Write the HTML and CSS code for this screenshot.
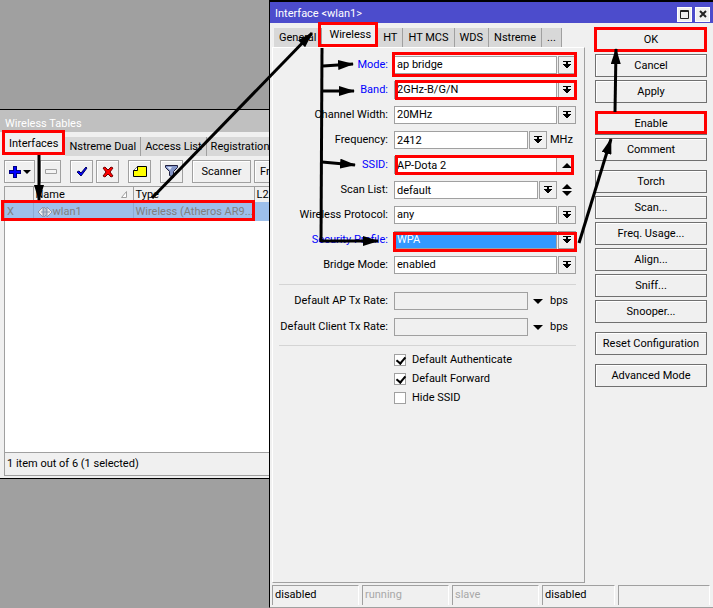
FILE: index.html
```
<!DOCTYPE html>
<html lang="en">
  <head>
    <meta charset="utf-8" />
    <title>Interface wlan1</title>
    <link rel="stylesheet" href="styles.css">
  </head>

  <body>
    <svg class="symbols" aria-hidden="true">
      <symbol id="drop" viewBox="0 0 8 8">
        <path d="M0 0h8v1H0zM3 1h2v2h3v1H7v1H6v1H5v1H3V6H2V5H1V4H0V3h3z" />
      </symbol>
      <symbol id="down" viewBox="0 0 10 5"><path d="M0 0h10L5 5z" /></symbol>
      <symbol id="up" viewBox="0 0 10 5"><path d="M0 5h10L5 0z" /></symbol>
    </svg>

    <section class="window tables-window">
      <header class="title-bar">Wireless Tables</header>
      <nav class="tabs">
        <button class="tab active">Interfaces</button>
        <button class="tab">Nstreme Dual</button>
        <button class="tab">Access List</button>
        <button class="tab">Registration</button>
      </nav>
      <div class="toolbar">
        <button class="tool tool-add" aria-label="Add">
          <svg width="22" height="12" viewBox="0 0 22 12"><path d="M4 0h4v4h4v4H8v4H4V8H0V4h4z" fill="#000080" /><path d="M5 1h2v4h4v2H7v4H5V7H1V5h4z" fill="#0000ff" /><path d="M14 4h8l-4 4z" /></svg>
        </button>
        <button class="tool tool-remove" aria-label="Remove">
          <svg width="12" height="5" viewBox="0 0 12 5"><path d="M.5.5h11v4H.5z" fill="#f4f4f4" stroke="#a0a0a0" /></svg>
        </button>
        <button class="tool tool-enable" aria-label="Enable">
          <svg width="12" height="11" viewBox="0 0 12 11"><path d="M1 6l2-1 2 2 5-6 1 1-6 8z" fill="#0000ff" stroke="#000060" /></svg>
        </button>
        <button class="tool tool-disable" aria-label="Disable">
          <svg width="12" height="12" viewBox="0 0 12 12"><path d="M1 2l2-1 3 3 3-3 2 1-3 4 3 4-2 1-3-3-3 3-2-1 3-4z" fill="#ff0000" stroke="#700000" /></svg>
        </button>
        <button class="tool tool-comment" aria-label="Comment">
          <svg width="14" height="11" viewBox="0 0 14 11"><path d="M4.500.5h9v10H.5v-6z" fill="#ffff00" stroke="#000" /><path d="M.5 4.500h4v-4" fill="#fff" stroke="#000" /></svg>
        </button>
        <button class="tool tool-filter" aria-label="Filter">
          <svg width="13" height="13" viewBox="0 0 13 13"><path d="M.5.5h12v2l-4 4v6l-4-2v-4l-4-4z" fill="#8496c8" stroke="#202040" /><path d="M2 2h5L5 5z" fill="#dce4f8" /></svg>
        </button>
        <button class="tool tool-scanner">Scanner</button>
        <button class="tool tool-freq">Freq. Usage</button>
      </div>
      <div class="list">
        <table>
          <thead>
            <tr>
              <th class="col-flag"></th>
              <th class="col-name">
                <div class="sort">Name
                  <svg width="6" height="7" viewBox="0 0 6 7"><path d="M.5 6.500L5.500.5v6z" fill="#fff" stroke="#a0a0a0" /></svg>
                </div>
              </th>
              <th class="col-type">Type</th>
              <th>L2 MTU</th>
            </tr>
          </thead>
          <tbody>
            <tr>
              <td>X</td>
              <td>
                <div class="iface">
                  <svg width="15" height="12" viewBox="0 0 15 12"><path d="M5 1L0 6l5 5zM6 1v10l2-2V3zM9 1v10l5-5z" fill="#eee" stroke="#8c98ac" /><path d="M3 6h9" stroke="#8c98ac" /></svg>
                  wlan1
                </div>
              </td>
              <td>Wireless (Atheros AR9...</td>
              <td></td>
            </tr>
          </tbody>
        </table>
      </div>
      <footer class="count">1 item out of 6 (1 selected)</footer>
    </section>

    <section class="window interface-window">
      <header class="title-bar">
        <span class="title">Interface &lt;wlan1&gt;</span>
        <button class="win-button" aria-label="Maximize">
          <svg width="9" height="9" viewBox="0 0 9 9"><path d="M.5.5h8v8h-8zM0 1.500h9" fill="none" stroke="#222" /></svg>
        </button>
        <button class="win-button" aria-label="Close">
          <svg width="8" height="8" viewBox="0 0 8 8"><path d="M1 1l6 6M7 1L1 7" stroke="#222" stroke-width="2" /></svg>
        </button>
      </header>

      <div class="main">
        <div class="left">
          <nav class="tabs">
            <button class="tab">General</button>
            <button class="tab active">Wireless</button>
            <button class="tab">HT</button>
            <button class="tab">HT MCS</button>
            <button class="tab">WDS</button>
            <button class="tab">Nstreme</button>
            <button class="tab">...</button>
          </nav>
          <form class="panel">
            <div class="fields">
              <div class="row">
                <label class="changed" for="mode">Mode:</label>
                <select id="mode"><option>ap bridge</option></select>
                <button type="button" class="drop" aria-label="Choose mode"><svg><use href="#drop" /></svg></button>
              </div>
              <div class="row">
                <label class="changed" for="band">Band:</label>
                <select id="band"><option>2GHz-B/G/N</option></select>
                <button type="button" class="drop" aria-label="Choose band"><svg><use href="#drop" /></svg></button>
              </div>
              <div class="row">
                <label for="width">Channel Width:</label>
                <select id="width"><option>20MHz</option></select>
                <button type="button" class="drop" aria-label="Choose width"><svg><use href="#drop" /></svg></button>
              </div>
              <div class="row">
                <label for="frequency">Frequency:</label>
                <input type="text" id="frequency" value="2412">
                <button type="button" class="drop" aria-label="Choose frequency"><svg><use href="#drop" /></svg></button>
                <span class="unit">MHz</span>
              </div>
              <div class="row">
                <label class="changed" for="ssid">SSID:</label>
                <input type="text" id="ssid" value="AP-Dota 2">
                <button type="button" class="plain" aria-label="Clear SSID"><svg><use href="#up" /></svg></button>
              </div>
              <div class="row">
                <label for="scan-list">Scan List:</label>
                <input type="text" id="scan-list" value="default">
                <button type="button" class="drop" aria-label="Choose scan list"><svg><use href="#drop" /></svg></button>
                <button type="button" class="plain spin" aria-label="Add or remove"><svg><use href="#up" /></svg><svg><use href="#down" /></svg></button>
              </div>
              <div class="row">
                <label for="protocol">Wireless Protocol:</label>
                <select id="protocol"><option>any</option></select>
                <button type="button" class="drop" aria-label="Choose protocol"><svg><use href="#drop" /></svg></button>
              </div>
              <div class="row">
                <label class="changed" for="security">Security Profile:</label>
                <select id="security" class="selected"><option>WPA</option></select>
                <button type="button" class="drop" aria-label="Choose profile"><svg><use href="#drop" /></svg></button>
              </div>
              <div class="row">
                <label for="bridge">Bridge Mode:</label>
                <select id="bridge"><option>enabled</option></select>
                <button type="button" class="drop" aria-label="Choose bridge mode"><svg><use href="#drop" /></svg></button>
              </div>
            </div>

            <div class="fields rates">
              <div class="row">
                <label for="ap-rate">Default AP Tx Rate:</label>
                <input type="text" id="ap-rate" class="empty">
                <button type="button" class="plain" aria-label="Set AP rate"><svg><use href="#down" /></svg></button>
                <span class="unit">bps</span>
              </div>
              <div class="row">
                <label for="client-rate">Default Client Tx Rate:</label>
                <input type="text" id="client-rate" class="empty">
                <button type="button" class="plain" aria-label="Set client rate"><svg><use href="#down" /></svg></button>
                <span class="unit">bps</span>
              </div>
            </div>

            <div class="checks">
              <label><input type="checkbox" checked> Default Authenticate</label>
              <label><input type="checkbox" checked> Default Forward</label>
              <label><input type="checkbox"> Hide SSID</label>
            </div>
          </form>
        </div>

        <aside class="actions">
          <div class="group">
            <button>OK</button>
            <button>Cancel</button>
            <button>Apply</button>
          </div>
          <div class="group">
            <button>Enable</button>
            <button>Comment</button>
          </div>
          <div class="group">
            <button>Torch</button>
            <button>Scan...</button>
            <button>Freq. Usage...</button>
            <button>Align...</button>
            <button>Sniff...</button>
            <button>Snooper...</button>
          </div>
          <div class="group">
            <button>Reset Configuration</button>
          </div>
          <div class="group">
            <button>Advanced Mode</button>
          </div>
        </aside>
      </div>

      <footer class="status">
        <span>disabled</span>
        <span class="off">running</span>
        <span class="off">slave</span>
        <span>disabled</span>
        <span></span>
      </footer>
    </section>

    <!-- red frames and arrows drawn over both windows -->
    <svg class="marks" width="713" height="608" viewBox="0 0 713 608" aria-hidden="true">
      <defs>
        <marker id="head" markerUnits="userSpaceOnUse" markerWidth="16" markerHeight="10" refX="15" refY="5" orient="auto">
          <path d="M0 0l16 5-16 5z" />
        </marker>
      </defs>
      <g class="frames">
        <rect x="3.500" y="131.500" width="60" height="22" />
        <rect x="2.500" y="201.500" width="251" height="18" />
        <rect x="319.500" y="23.500" width="57" height="22" />
        <rect x="393.500" y="53.500" width="182" height="22" />
        <rect x="396.500" y="81.500" width="179" height="17" />
        <rect x="396.500" y="156.500" width="176" height="17" />
        <rect x="394.500" y="233.500" width="181" height="17" />
        <rect x="595.500" y="28.500" width="110" height="22" />
        <rect x="596.500" y="112.500" width="109" height="20" />
      </g>
      <g class="arrows">
        <path d="M39 155V200" />
        <path d="M152 198L312 33" />
        <path d="M323 66L353 64" />
        <path d="M323 91H354" />
        <path d="M322 162L355 165" />
        <path d="M321 241H378" />
        <path d="M579 243L611 139" />
        <path d="M615 112L616 49" />
      </g>
      <path class="trunk" d="M322 48L321 242" />
    </svg>
  </body>
</html>
```
FILE: styles.css
```
* {
  box-sizing: border-box;
}

body {
  margin: 0;
  min-height: 100vh;
  position: relative;
  overflow: hidden;
  background-color: #a0a0a0;
  font-family: Roboto, "Liberation Sans", Arial, sans-serif;
  font-size: 11px;
  line-height: 14px;
  color: #000;
}

button,
input,
select {
  font: inherit;
  color: inherit;
  margin: 0;
  padding: 0;
  border-radius: 0;
}

button {
  white-space: nowrap;
}

svg {
  display: block;
}

.symbols {
  position: absolute;
  width: 0;
  height: 0;
}

/* windows */

.window {
  position: absolute;
  display: flex;
  flex-direction: column;
  background-color: #f0f0f0;
  border: 1px solid #000;
}

.tables-window {
  top: 109px;
  left: 0;
  width: 480px;
  height: 370px;
  border-left: 0;
  white-space: nowrap;
}

.interface-window {
  top: 0;
  left: 269px;
  right: 0;
  bottom: 0;
  border-top-width: 2px;
  border-right: 0;
  border-bottom-color: #a0a0a0;
}

.title-bar {
  display: flex;
  align-items: center;
  gap: 3px;
  height: 21px;
  padding: 3px 3px 0 5px;
  color: #fff;
  background-color: #4c4ccc;
}

.tables-window .title-bar {
  height: 22px;
  padding-top: 5px;
  background-color: #c0c0c0;
}

.title {
  flex: 1;
}

.win-button {
  display: flex;
  align-items: center;
  justify-content: center;
  width: 15px;
  height: 15px;
  border: 1px solid #fff;
  background-color: #f0f0f0;
}

/* tabs */

.tabs {
  display: flex;
  align-items: flex-end;
  height: 24px;
  padding-left: 2px;
}

.tab {
  height: 19px;
  padding: 0 5px;
  border: 0;
  border-right: 1px solid #a0a0a0;
  background-color: #d8d8d8;
}

.tables-window .tab {
  padding: 0 4px;
}

.tab.active,
.tables-window .tab.active {
  height: 24px;
  padding: 0 7px;
  border: 0;
  background-color: #f0f0f0;
}

/* wireless tables */

.toolbar {
  display: flex;
  align-items: center;
  padding: 4px 0 3px 4px;
}

.tool {
  display: flex;
  align-items: center;
  justify-content: center;
  width: 23px;
  height: 23px;
  flex-shrink: 0;
  margin-right: 3px;
  border: 1px solid #a0a0a0;
  background-color: #f0f0f0;
  box-shadow: inset 1px 1px #fff;
}

.tool-add {
  width: 31px;
  margin-right: 5px;
}

.tool-remove {
  width: 21px;
  margin-right: 9px;
}

.tool-disable,
.tool-comment,
.tool-filter {
  margin-right: 9px;
}

.tool-scanner {
  width: 59px;
}

.tool-freq {
  width: 70px;
}

.list {
  flex: 1;
  margin-left: 4px;
  border: 1px solid #a0a0a0;
  background-color: #fff;
}

table {
  width: 100%;
  border-collapse: collapse;
  table-layout: fixed;
}

th,
td {
  padding: 0 2px;
  font-weight: normal;
  text-align: left;
}

th {
  height: 15px;
  background-color: #f0f0f0;
  border-right: 1px solid #a0a0a0;
}

td {
  height: 19px;
  color: #808080;
  background-color: #9dbfea;
  border-right: 1px solid #8cabd4;
}

.col-flag {
  width: 28px;
}

.col-name {
  width: 100px;
}

.col-type {
  width: 121px;
}

.sort {
  display: flex;
  align-items: center;
  justify-content: space-between;
  padding-right: 4px;
}

.iface {
  display: flex;
  align-items: center;
  padding-left: 2px;
}

.count {
  height: 23px;
  margin-left: 4px;
  margin-bottom: 2px;
  padding: 4px 2px;
  border-left: 1px solid #a0a0a0;
  border-bottom: 1px solid #a0a0a0;
}

/* interface dialog */

.main {
  display: flex;
  flex: 1;
  padding-left: 2px;
}

.left {
  display: flex;
  flex: 1;
  flex-direction: column;
  min-width: 0;
}

.panel {
  flex: 1;
  padding: 8px 8px 0 6px;
  border-top: 1px solid #fff;
  border-left: 1px solid #fff;
  border-right: 1px solid #a0a0a0;
  border-bottom: 1px solid #a0a0a0;
}

.fields {
  display: flex;
  flex-direction: column;
  gap: 7px;
}

.row {
  display: flex;
  align-items: center;
  height: 18px;
}

.row label {
  flex-shrink: 0;
  width: 109px;
  margin-right: 6px;
  text-align: right;
  white-space: nowrap;
}

.row .changed {
  color: #0000ff;
}

.row input,
.row select {
  flex: 1;
  min-width: 0;
  height: 18px;
  padding: 0 2px;
  appearance: none;
  outline: none;
  border: 1px solid #a0a0a0;
  background-color: #fff;
}

.row .selected {
  color: #fff;
  background-color: #3399ff;
}

.row .empty {
  background-color: #f0f0f0;
}

.drop,
.plain {
  display: flex;
  align-items: center;
  justify-content: center;
  width: 18px;
  height: 18px;
  margin-left: 1px;
  background-color: #f0f0f0;
}

.drop {
  border: 1px solid #a0a0a0;
}

.drop svg {
  width: 8px;
  height: 8px;
}

.plain {
  border: 0;
}

.plain svg {
  width: 10px;
  height: 5px;
}

.spin {
  flex-direction: column;
  gap: 2px;
}

.unit {
  width: 29px;
  padding-left: 3px;
}

.rates {
  gap: 8px;
  margin: 10px 0 7px;
  padding: 7px 0 9px;
  border-top: 1px solid #d4d4d4;
  border-bottom: 1px solid #d4d4d4;
}

.checks {
  display: flex;
  flex-direction: column;
  gap: 5px;
  padding-left: 115px;
}

.checks label {
  display: flex;
  align-items: center;
  gap: 6px;
}

.checks input {
  width: 12px;
  height: 12px;
  appearance: none;
  border: 1px solid #a0a0a0;
  background-color: #fff;
}

.checks input:checked::before {
  content: "";
  display: block;
  width: 4px;
  height: 7px;
  margin-left: 3px;
  border: solid #000;
  border-width: 0 2px 2px 0;
  transform: rotate(40deg);
}

.actions {
  display: flex;
  flex-direction: column;
  gap: 9px;
  padding: 5px 6px 0 10px;
}

.group {
  display: flex;
  flex-direction: column;
  gap: 3px;
}

.group button {
  width: 112px;
  height: 23px;
  border: 1px solid #707070;
  background-color: #f0f0f0;
  box-shadow: inset 1px 1px #fff;
}

.status {
  display: grid;
  grid-template-columns: 87px 87px 87px 73px 1fr;
  gap: 3px;
  padding: 2px 3px 2px 2px;
}

.status span {
  height: 20px;
  padding: 2px;
  border-top: 1px solid #a0a0a0;
  border-left: 1px solid #a0a0a0;
  border-right: 1px solid #fff;
}

.status .off {
  color: #a8a8a8;
}

/* marks */

.marks {
  position: absolute;
  top: 0;
  left: 0;
  pointer-events: none;
}

.frames {
  fill: none;
  stroke: #ff0000;
  stroke-width: 3px;
}

.arrows,
.trunk {
  fill: none;
  stroke: #000;
  stroke-width: 3px;
}

.arrows path {
  marker-end: url(#head);
}

marker path {
  fill: #000;
  stroke: none;
}
```
